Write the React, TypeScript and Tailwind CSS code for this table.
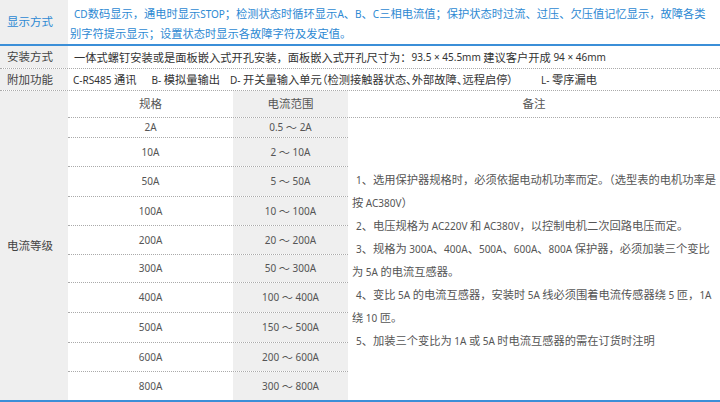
import type { FC, ReactNode } from 'react';

const RATINGS = [
  { spec: '2A', range: '0.5 ～ 2A', h: 'h-[20px]' },
  { spec: '10A', range: '2 ～ 10A', h: 'h-[29px]' },
  { spec: '50A', range: '5 ～ 50A', h: 'h-[30px]' },
  { spec: '100A', range: '10 ～ 100A', h: 'h-[29px]' },
  { spec: '200A', range: '20 ～ 200A', h: 'h-[29px]' },
  { spec: '300A', range: '50 ～ 300A', h: 'h-[28px]' },
  { spec: '400A', range: '100 ～ 400A', h: 'h-[30px]' },
  { spec: '500A', range: '150 ～ 500A', h: 'h-[30px]' },
  { spec: '600A', range: '200 ～ 600A', h: 'h-[29px]' },
  { spec: '800A', range: '300 ～ 800A', h: 'h-[28px]' },
];

// each line kept as written so wrapping matches the sheet
const NOTES = [
  { text: '1、选用保护器规格时，必须依据电动机功率而定。（选型表的电机功率是', first: true },
  { text: '按 AC380V）', first: false },
  { text: '2、电压规格为 AC220V 和 AC380V，以控制电机二次回路电压而定。', first: true },
  { text: '3、规格为 300A、400A、500A、600A、800A 保护器，必须加装三个变比', first: true },
  { text: '为 5A 的电流互感器。', first: false },
  { text: '4、变比 5A 的电流互感器，安装时 5A 线必须围着电流传感器绕 5 匝，1A', first: true },
  { text: '绕 10 匝。', first: false },
  { text: '5、加装三个变比为 1A 或 5A 时电流互感器的需在订货时注明', first: true },
];

// latin runs set a little smaller than the CJK text, as on the sheet
const LATIN = /([A-Za-z0-9.×\-][A-Za-z0-9.×\- ]*[A-Za-z0-9.×\-]|[A-Za-z0-9.×\-])/;

const Mix: FC<{ text: string }> = ({ text }) => {
  const parts = text.split(LATIN);
  const out: ReactNode[] = parts.map((p, i) =>
    i % 2 === 1 ? (
      <span key={i} className="font-['Noto_Sans',sans-serif] text-[10px]">
        {p}
      </span>
    ) : (
      p
    )
  );
  return <>{out}</>;
};

const Label: FC<{ text: string; blue?: boolean }> = ({ text, blue }) => (
  <div
    className={
      'flex w-[68px] shrink-0 items-center bg-[#efefef] pl-[7px] text-[11.5px] ' +
      (blue ? 'text-[#2d89d3]' : 'text-[#444]')
    }
  >
    {text}
  </div>
);

export default function App() {
  return (
    <div className="flex h-[402px] w-[720px] flex-col overflow-hidden bg-white font-['Noto_Sans_CJK_SC','Noto_Sans',sans-serif] text-[11.25px]">
      {/* 显示方式 */}
      <div className="flex h-[46px] border-b-2 border-[#3b8fd8]">
        <Label text="显示方式" blue />
        <div className="flex flex-col justify-center pt-[2px] pl-[2px] leading-[19px] text-[#2d89d3]">
          <div className="whitespace-nowrap pl-[4px]">
            <Mix text="CD数码显示，通电时显示STOP；检测状态时循环显示A、B、C三相电流值；保护状态时过流、过压、欠压值记忆显示，故障各类" />
          </div>
          <div className="whitespace-nowrap">别字符提示显示；设置状态时显示各故障字符及发定值。</div>
        </div>
      </div>

      {/* 安装方式 */}
      <div className="flex h-[23px] border-b border-dotted border-[#aaa]">
        <Label text="安装方式" />
        <div className="flex items-center whitespace-pre pl-[6px] text-[#333]">
          <Mix text="一体式螺钉安装或是面板嵌入式开孔安装，面板嵌入式开孔尺寸为：93.5 × 45.5mm 建议客户开成 94 × 46mm" />
        </div>
      </div>

      {/* 附加功能 */}
      <div className="flex h-[22px] border-b border-dotted border-[#aaa]">
        <Label text="附加功能" />
        <div className="flex items-center whitespace-pre pl-[5px] text-[#333]">
          <span>
            <Mix text="C-RS485 通讯" />
          </span>
          <span className="ml-[15px]">
            <Mix text="B- 模拟量输出" />
          </span>
          <span className="ml-[10px] [font-feature-settings:'palt']">
            <Mix text="D- 开关量输入单元（检测接触器状态、外部故障、远程启停）" />
          </span>
          <span className="ml-[28px]">
            <Mix text="L- 零序漏电" />
          </span>
        </div>
      </div>

      {/* 电流等级 */}
      <div className="flex h-[311px] border-b-2 border-[#3b8fd8]">
        <Label text="电流等级" />
        <div className="flex flex-1 flex-col text-[#555]">
          <div className="flex h-[27px] border-b border-dotted border-[#aaa] text-[11.5px]">
            <div className="flex w-[165px] items-center justify-center">规格</div>
            <div className="flex w-[115px] items-center justify-center bg-[#efefef]">电流范围</div>
            <div className="flex flex-1 items-center justify-center">备注</div>
          </div>
          <div className="flex flex-1">
            <div className="flex w-[280px] flex-col">
              {RATINGS.map((r, i) => (
                <div
                  key={r.spec}
                  className={
                    'flex whitespace-pre ' +
                    r.h +
                    (i < RATINGS.length - 1 ? ' border-b border-dotted border-[#aaa]' : '')
                  }
                >
                  <div className="flex w-[165px] items-center justify-center">
                    <Mix text={r.spec} />
                  </div>
                  <div className="flex w-[115px] items-center justify-center bg-[#efefef]">
                    <Mix text={r.range} />
                  </div>
                </div>
              ))}
            </div>
            <div className="flex flex-1 flex-col justify-center pt-[2px] pl-[4px] leading-[22px]">
              {NOTES.map((n) => (
                <div key={n.text} className={'whitespace-pre ' + (n.first ? 'pl-[4px]' : '')}>
                  <Mix text={n.text} />
                </div>
              ))}
            </div>
          </div>
        </div>
      </div>
    </div>
  );
}
